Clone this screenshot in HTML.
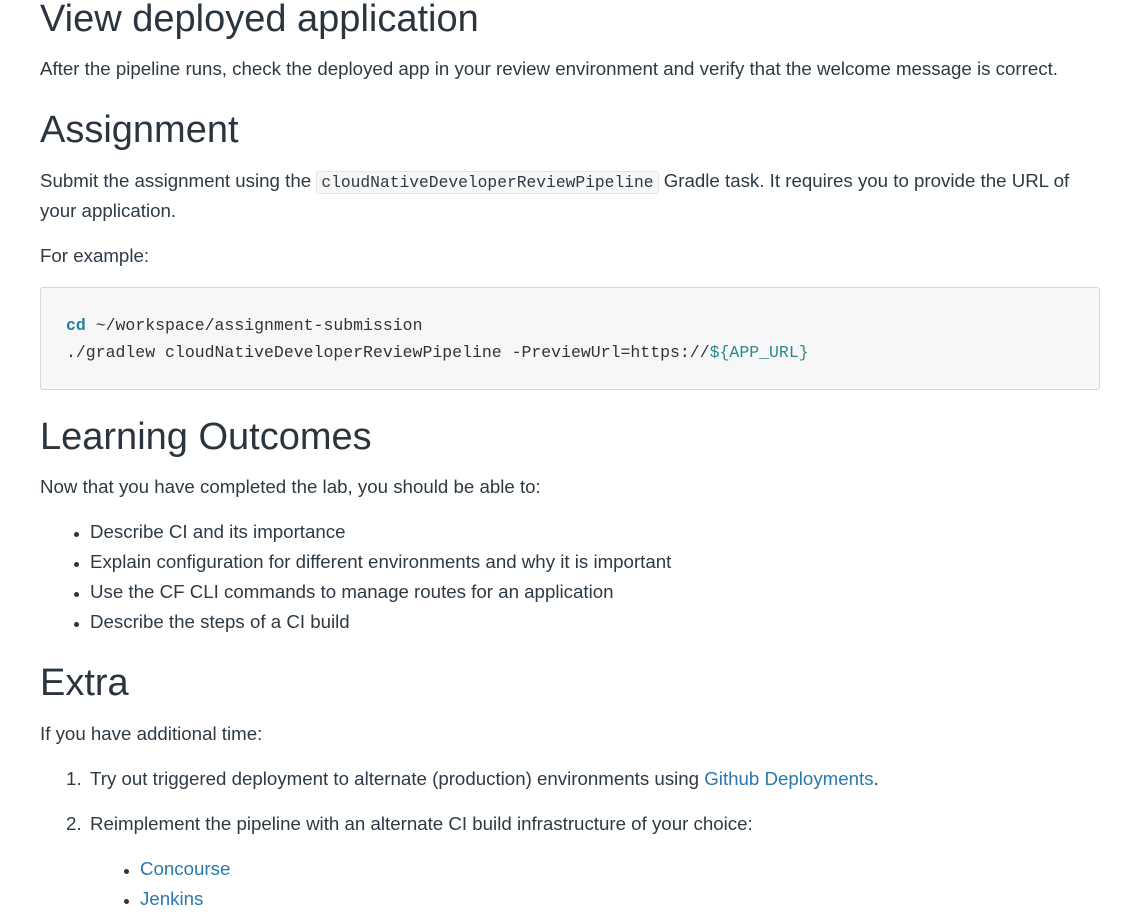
<!DOCTYPE html>
<html><head><meta charset="utf-8"><style>
html,body{margin:0;padding:0;background:#fff;width:1142px;height:917px;overflow:hidden;position:relative}
body{font-family:"Liberation Sans",sans-serif;color:#2d3a45;font-size:18.7px}
.a{position:absolute;white-space:nowrap;line-height:30px}
h1,h2{font-weight:400;margin:0;font-size:38px;color:#2a3540;position:absolute;white-space:nowrap;line-height:44px;left:40px}
code{font-family:"Liberation Mono",monospace}
.ic{font-size:16.3px;background:#f7f7f7;border:1px solid #e6e6e6;border-radius:3px;padding:1px 4px}
.pre{position:absolute;left:40px;top:287px;width:1058px;height:101px;background:#f7f7f7;border:1px solid #d8d8d8;border-radius:3px}
.pre div{position:absolute;left:25px;font-family:"Liberation Mono",monospace;font-size:16.5px;white-space:nowrap;line-height:27px;color:#333}
.k{color:#1f7fa8;font-weight:bold}.t{color:#2a8a8a}
a{color:#2a78ad;text-decoration:none}
.b{position:absolute;width:5px;height:5px;border-radius:50%;background:#333}
</style></head><body>
<h1 style="top:-3px">View deployed application</h1>
<div class="a" style="left:40px;top:54px">After the pipeline runs, check the deployed app in your review environment and verify that the welcome message is correct.</div>
<h2 style="top:108px">Assignment</h2>
<div class="a" style="left:40px;top:166px">Submit the assignment using the <code class="ic">cloudNativeDeveloperReviewPipeline</code> Gradle task. It requires you to provide the URL of</div>
<div class="a" style="left:40px;top:196px">your application.</div>
<div class="a" style="left:40px;top:241px">For example:</div>
<div class="pre">
<div style="top:24px"><span class="k">cd</span> ~/workspace/assignment-submission</div>
<div style="top:51px">./gradlew cloudNativeDeveloperReviewPipeline -PreviewUrl=https://<span class="t">${APP_URL}</span></div>
</div>
<h2 style="top:415px">Learning Outcomes</h2>
<div class="a" style="left:40px;top:472px">Now that you have completed the lab, you should be able to:</div>
<div class="b" style="left:74px;top:532px"></div><div class="a" style="left:90px;top:517px">Describe CI and its importance</div>
<div class="b" style="left:74px;top:562px"></div><div class="a" style="left:90px;top:547px">Explain configuration for different environments and why it is important</div>
<div class="b" style="left:74px;top:592px"></div><div class="a" style="left:90px;top:577px">Use the CF CLI commands to manage routes for an application</div>
<div class="b" style="left:74px;top:622px"></div><div class="a" style="left:90px;top:607px">Describe the steps of a CI build</div>
<h2 style="top:661px">Extra</h2>
<div class="a" style="left:40px;top:719px">If you have additional time:</div>
<div class="a" style="left:66px;top:764px">1.</div><div class="a" style="left:90px;top:764px">Try out triggered deployment to alternate (production) environments using <a>Github Deployments</a>.</div>
<div class="a" style="left:66px;top:809px">2.</div><div class="a" style="left:90px;top:809px">Reimplement the pipeline with an alternate CI build infrastructure of your choice:</div>
<div class="b" style="left:124px;top:869px"></div><div class="a" style="left:140px;top:854px"><a>Concourse</a></div>
<div class="b" style="left:124px;top:899px"></div><div class="a" style="left:140px;top:884px"><a>Jenkins</a></div>
</body></html>
